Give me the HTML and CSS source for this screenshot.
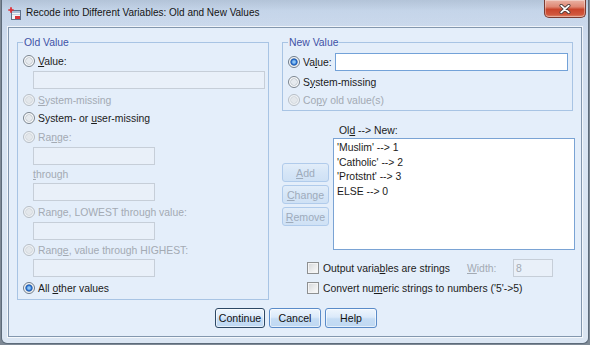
FILE: index.html
```html
<!DOCTYPE html>
<html>
<head>
<meta charset="utf-8">
<title>Recode into Different Variables: Old and New Values</title>
<link rel="stylesheet" href="styles.css">
</head>
<body>
<div class="window">
  <div class="titlebar">
    <svg class="appicon" viewBox="0 0 13 13" width="13" height="13">
      <rect x="3.5" y="3.5" width="9" height="9" fill="#f2f5f9" stroke="#5f718a"/>
      <rect x="4" y="4" width="8" height="2" fill="#a9bdd6"/>
      <rect x="4" y="7" width="8" height="1" fill="#c9d4e2"/>
      <rect x="7" y="9" width="5" height="3" fill="#d8353b"/>
      <path d="M3 0.3v5.4M0.3 3h5.4" stroke="#e02a30" stroke-width="1.7"/>
    </svg>
    <span class="title">Recode into Different Variables: Old and New Values</span>
    <div class="close">
      <svg width="12" height="10" viewBox="0 0 12 10">
        <path d="M2.2 1.6l7.6 6.8M9.8 1.6l-7.6 6.8" stroke="#4a3a38" stroke-width="3.4" stroke-linecap="round"/>
        <path d="M2.2 1.6l7.6 6.8M9.8 1.6l-7.6 6.8" stroke="#ffffff" stroke-width="1.8" stroke-linecap="round"/>
      </svg>
    </div>
  </div>

  <div class="client">
    <div class="main">
      <fieldset class="group old">
        <legend>Old Value</legend>
        <div class="opt"><span class="radio"></span><span><u>V</u>alue:</span></div>
        <div class="field wide mt1"></div>
        <div class="opt mt2 disabled"><span class="radio"></span><span><u>S</u>ystem-missing</span></div>
        <div class="opt"><span class="radio"></span><span>System- or <u>u</u>ser-missing</span></div>
        <div class="opt mt1 disabled"><span class="radio"></span><span>Ra<u>n</u>ge:</span></div>
        <div class="field narrow mt1"></div>
        <div class="opt indent disabled"><span><u>t</u>hrough</span></div>
        <div class="field narrow"></div>
        <div class="opt mt2 disabled"><span class="radio"></span><span>Ran<u>g</u>e, LOWEST through value:</span></div>
        <div class="field narrow mt1"></div>
        <div class="opt mt1 disabled"><span class="radio"></span><span>Rang<u>e</u>, value through HIGHEST:</span></div>
        <div class="field narrow"></div>
        <div class="opt mt2"><span class="radio on"></span><span>All <u>o</u>ther values</span></div>
      </fieldset>

      <div class="right">
        <fieldset class="group new">
          <legend>New Value</legend>
          <div class="opt tall"><span class="radio on"></span><span>Va<u>l</u>ue:</span><div class="input-live"></div></div>
          <div class="opt mt1"><span class="radio"></span><span>S<u>y</u>stem-missing</span></div>
          <div class="opt disabled"><span class="radio"></span><span>Co<u>p</u>y old value(s)</span></div>
        </fieldset>

        <div class="mid">
          <div class="btncol">
            <div class="btn side"><u>A</u>dd</div>
            <div class="btn side"><u>C</u>hange</div>
            <div class="btn side"><u>R</u>emove</div>
          </div>
          <div class="listcol">
            <div class="listlabel">Ol<u>d</u> --&gt; New:</div>
            <div class="list">
              <div class="item">'Muslim' --&gt; 1</div>
              <div class="item">'Catholic' --&gt; 2</div>
              <div class="item">'Protstnt' --&gt; 3</div>
              <div class="item">ELSE --&gt; 0</div>
            </div>
          </div>
        </div>

        <div class="checks">
          <div class="chk-row">
            <span class="checkbox"></span>
            <span class="chk-text">Output varia<u>b</u>les are strings</span>
            <span class="width-label"><u>W</u>idth:</span>
            <div class="width-field">8</div>
          </div>
          <div class="chk-row mt2">
            <span class="checkbox"></span>
            <span>Convert nu<u>m</u>eric strings to numbers ('5'-&gt;5)</span>
          </div>
        </div>
      </div>
    </div>

    <div class="actions">
      <div class="btn main-btn default">Continue</div>
      <div class="btn main-btn">Cancel</div>
      <div class="btn main-btn">Help</div>
    </div>
  </div>
</div>
</body>
</html>
```

FILE: styles.css
```css
* { box-sizing: border-box; }
html, body { margin: 0; padding: 0; }
body {
  width: 590px;
  height: 345px;
  overflow: hidden;
  background: #7e8995;
  font-family: "Liberation Sans", Arial, sans-serif;
  font-size: 10.4px;
  color: #1b1b1b;
}
u { text-decoration: underline; text-underline-offset: 1px; }

.window {
  width: 588px;
  height: 344px;
  margin: 0 1px;
  border: 1px solid #5d6b7a;
  border-top: none;
  border-radius: 0 0 6px 6px;
  background: linear-gradient(180deg, #c3d4e9 0%, #cfdcee 12%, #d8e4f2 40%, #dbe6f3 100%);
  display: flex;
  flex-direction: column;
}

.titlebar {
  flex: none;
  height: 27px;
  display: flex;
  align-items: flex-start;
  background: linear-gradient(180deg, rgba(150,165,185,0.35) 0%, rgba(190,205,225,0.15) 40%, rgba(255,255,255,0) 100%);
}
.appicon { flex: none; margin: 7px 0 0 6px; }
.title {
  margin: 7px 0 0 5px;
  font-size: 10px;
  line-height: 12px;
  color: #151515;
}
.close {
  flex: none;
  margin-left: auto;
  margin-right: 2px;
  width: 42px;
  height: 18px;
  border: 1px solid #7a3b31;
  border-top: none;
  border-radius: 0 0 5px 5px;
  background: linear-gradient(180deg, #eab2a4 0%, #df8773 40%, #c9442b 55%, #d0563c 85%, #df8a6d 100%);
  box-shadow: inset 0 0 0 1px rgba(255,255,255,0.35);
  display: flex;
  align-items: center;
  justify-content: center;
}

.client {
  flex: none;
  height: 310px;
  margin: 0 6px;
  border: 1px solid #8397ae;
  background: #e4eefa;
  padding: 8px 6px 0 8px;
  box-shadow: 0 0 0 1px rgba(255,255,255,0.7);
}

.main { display: flex; align-items: flex-start; }

.group {
  margin: 0;
  border: 1px solid #a8c4e4;
  min-width: 0;
}
.group legend {
  padding: 0 1px;
  line-height: 13px;
  color: #3f52a6;
}
.old { width: 252px; padding: 3px 3px 2px 5px; }
.new { width: 291px; padding: 3px 4px 1px 5px; }

.opt {
  display: flex;
  align-items: center;
  height: 18px;
  white-space: nowrap;
}
.opt.tall { height: 20px; }
.opt.indent { padding-left: 10px; }
.disabled { color: #a3aab3; }
.mt1 { margin-top: 1px; }
.mt2 { margin-top: 2px; }

.radio {
  flex: none;
  width: 12px;
  height: 12px;
  margin-right: 3px;
  border-radius: 50%;
  border: 1px solid #7b858f;
  background: radial-gradient(circle, #e6eaee 0 2.6px, #c0c7ce 3.2px, #f8f9fa 4.2px);
}
.radio.on {
  border-color: #6f7c8a;
  background: radial-gradient(circle, #8cc4f4 0 1.2px, #2a72cf 2.4px, #1c58b0 3.2px, #bcc6d0 3.8px, #f5f7f9 4.4px);
}
.disabled .radio {
  border-color: #b7bec6;
  background: radial-gradient(circle, #e3e7eb 0 2.6px, #cfd5db 3.2px, #eef1f4 4.2px);
}

.field {
  height: 18px;
  margin-left: 10px;
  border: 1px solid #c6ced8;
  background: #e9f0f9;
}
.field.wide { width: 232px; }
.field.narrow { width: 122px; }

.input-live {
  flex: 1;
  height: 18px;
  margin-left: 3px;
  border: 1px solid #73a2d8;
  background: #ffffff;
}

.right { width: 293px; margin-left: 13px; }

.mid { display: flex; margin-top: 13px; }
.btncol {
  width: 47px;
  flex: none;
  padding-top: 39px;
  display: flex;
  flex-direction: column;
  gap: 3px;
}
.btn {
  display: flex;
  align-items: center;
  justify-content: center;
  border-radius: 3px;
  font-size: 10.6px;
}
.btn.side {
  height: 19px;
  border: 1px solid #b0cbeb;
  background: linear-gradient(180deg, #e2edf9 0%, #d6e6f7 50%, #cfe1f5 100%);
  color: #9eabbb;
}
.listcol { width: 242px; margin-left: 4px; flex: none; }
.listlabel { line-height: 14px; padding-left: 6px; }
.list {
  height: 112px;
  border: 1px solid #7aa3d4;
  background: #ffffff;
  padding: 2px 0 0 3px;
}
.item { line-height: 14.7px; white-space: nowrap; }

.checks { margin-top: 9px; padding-left: 25px; }
.chk-row {
  display: flex;
  align-items: center;
  height: 18px;
  white-space: nowrap;
}
.checkbox {
  flex: none;
  width: 12px;
  height: 12px;
  margin-right: 4px;
  border: 1px solid #8e9091;
  background: linear-gradient(135deg, #d4d6d8 0%, #e9eaeb 50%, #fbfbfb 100%);
  box-shadow: inset 0 0 0 1px #f4f4f4;
}
.chk-text { width: 144px; }
.width-label { width: 46px; color: #a3aab3; }
.width-field {
  width: 40px;
  height: 18px;
  border: 1px solid #c6ced8;
  background: #e9f0f9;
  color: #a3aab3;
  padding: 3px 0 0 2px;
  line-height: 12px;
}

.actions {
  display: flex;
  justify-content: center;
  gap: 4px;
  margin-top: 8px;
}
.btn.main-btn {
  width: 52px;
  height: 20px;
  border: 1px solid #5a8bc8;
  background: linear-gradient(180deg, #eef5fd 0%, #dbeafa 45%, #c5dcf4 55%, #bfd8f2 100%);
  color: #111;
  box-shadow: inset 0 0 0 1px rgba(255,255,255,0.6);
}
.btn.main-btn.default {
  width: 50px;
  border-color: #2d4865;
}
```
